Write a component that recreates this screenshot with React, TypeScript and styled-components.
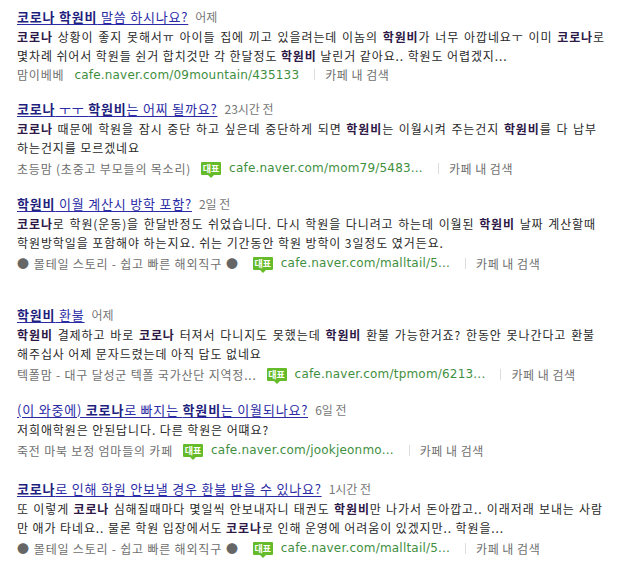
import React, { FC } from "react";
import styled, { createGlobalStyle } from "styled-components";

type Seg = { t: string; b?: boolean };
type Line = { segs: Seg[]; fill?: number };

type Item = {
  title: Seg[];
  date: string;
  body: Line[];
  source: string;
  dots?: boolean;
  badge?: boolean;
  url: string;
  above?: number;
};

const items: Item[] = [
  {
    title: [{ t: "코로나 학원비", b: true }, { t: " 말씀 하시나요?" }],
    date: "어제",
    body: [
      {
        fill: 588,
        segs: [
          { t: "코로나", b: true },
          { t: " 상황이 좋지 못해서ㅠ 아이들 집에 끼고 있을려는데 이놈의 " },
          { t: "학원비", b: true },
          { t: "가 너무 아깝네요ㅜ 이미 " },
          { t: "코로나", b: true },
          { t: "로" },
        ],
      },
      {
        segs: [
          { t: "몇차례 쉬어서 학원들 쉰거 합치것만 각 한달정도 " },
          { t: "학원비", b: true },
          { t: " 날린거 같아요.. 학원도 어렵겠지..." },
        ],
      },
    ],
    source: "맘이베베",
    url: "cafe.naver.com/09mountain/435133",
  },
  {
    title: [{ t: "코로나", b: true }, { t: " ㅜㅜ " }, { t: "학원비", b: true }, { t: "는 어찌 될까요?" }],
    date: "23시간 전",
    body: [
      {
        fill: 580,
        segs: [
          { t: "코로나", b: true },
          { t: " 때문에 학원을 잠시 중단 하고 싶은데 중단하게 되면 " },
          { t: "학원비", b: true },
          { t: "는 이월시켜 주는건지 " },
          { t: "학원비", b: true },
          { t: "를 다 납부" },
        ],
      },
      { segs: [{ t: "하는건지를 모르겠네요" }] },
    ],
    source: "초등맘 (초중고 부모들의 목소리)",
    badge: true,
    url: "cafe.naver.com/mom79/5483...",
  },
  {
    title: [{ t: "학원비", b: true }, { t: " 이월 계산시 방학 포함?" }],
    date: "2일 전",
    body: [
      {
        fill: 579,
        segs: [
          { t: "코로나", b: true },
          { t: "로 학원(운동)을 한달반정도 쉬었습니다. 다시 학원을 다니려고 하는데 이월된 " },
          { t: "학원비", b: true },
          { t: " 날짜 계산할때" },
        ],
      },
      { segs: [{ t: "학원방학일을 포함해야 하는지요. 쉬는 기간동안 학원 방학이 3일정도 였거든요." }] },
    ],
    source: "몰테일 스토리 - 쉽고 빠른 해외직구",
    dots: true,
    badge: true,
    url: "cafe.naver.com/malltail/5...",
  },
  {
    title: [{ t: "학원비", b: true }, { t: " 환불" }],
    date: "어제",
    body: [
      {
        fill: 578,
        segs: [
          { t: "학원비", b: true },
          { t: " 결제하고 바로 " },
          { t: "코로나", b: true },
          { t: " 터져서 다니지도 못했는데 " },
          { t: "학원비", b: true },
          { t: " 환불 가능한거죠? 한동안 못나간다고 환불" },
        ],
      },
      { segs: [{ t: "해주십사 어제 문자드렸는데 아직 답도 없네요" }] },
    ],
    source: "텍폴맘 - 대구 달성군 텍폴 국가산단 지역정...",
    badge: true,
    url: "cafe.naver.com/tpmom/6213...",
    above: 16,
  },
  {
    title: [
      { t: "(이 와중에) " },
      { t: "코로나", b: true },
      { t: "로 빠지는 " },
      { t: "학원비", b: true },
      { t: "는 이월되나요?" },
    ],
    date: "6일 전",
    body: [{ segs: [{ t: "저희애학원은 안된답니다. 다른 학원은 어떄요?" }] }],
    source: "죽전 마북 보정 엄마들의 카페",
    badge: true,
    url: "cafe.naver.com/jookjeonmo...",
  },
  {
    title: [{ t: "코로나", b: true }, { t: "로 인해 학원 안보낼 경우 환불 받을 수 있나요?" }],
    date: "1시간 전",
    body: [
      {
        fill: 586,
        segs: [
          { t: "또 이렇게 " },
          { t: "코로나", b: true },
          { t: " 심해질때마다 몇일씩 안보내자니 태권도 " },
          { t: "학원비", b: true },
          { t: "만 나가서 돈아깝고.. 이래저래 보내는 사람" },
        ],
      },
      {
        segs: [
          { t: "만 애가 타네요.. 물론 학원 입장에서도 " },
          { t: "코로나", b: true },
          { t: "로 인해 운영에 어려움이 있겠지만.. 학원을..." },
        ],
      },
    ],
    source: "몰테일 스토리 - 쉽고 빠른 해외직구",
    dots: true,
    badge: true,
    url: "cafe.naver.com/malltail/5...",
    above: 3,
  },
];

const App: FC = () => {
  return (
    <List>
      <GlobalStyle />
      {items.map((item, i) => (
        <Entry key={i} $above={item.above ?? 0}>
          <TitleRow>
            <TitleLink href="#">
              {item.title.map((s, j) =>
                s.b ? <TitleStrong key={j}>{s.t}</TitleStrong> : <span key={j}>{s.t}</span>
              )}
            </TitleLink>
            <DateText>{item.date}</DateText>
          </TitleRow>
          {item.body.map((line, j) => (
            <BodyLine key={j} $fill={line.fill}>
              {line.segs.map((s, k) => (s.b ? <Hit key={k}>{s.t}</Hit> : <span key={k}>{s.t}</span>))}
            </BodyLine>
          ))}
          <MetaRow $tall={item.badge}>
            <Source>
              {item.dots && <Dot>●</Dot>}
              {item.source}
              {item.dots && <Dot>●</Dot>}
            </Source>
            {item.badge && <Badge>대표</Badge>}
            <Url>{item.url}</Url>
            <Divider />
            <CafeSearch>카페 내 검색</CafeSearch>
          </MetaRow>
        </Entry>
      ))}
    </List>
  );
};

const GlobalStyle = createGlobalStyle`
  body {
    margin: 0;
    background: #fff;
    font-family: "Noto Sans CJK KR", "Noto Sans", sans-serif;
  }
`;

const List = styled.div`
  display: flex;
  flex-direction: column;
  gap: 15px;
  padding: 7px 0 0 17px;
  width: 632px;
  box-sizing: border-box;
`;

const Entry = styled.div<{ $above: number }>`
  display: flex;
  flex-direction: column;
  margin-top: ${(p) => p.$above}px;
`;

const TitleRow = styled.div`
  display: flex;
  align-items: baseline;
  gap: 7px;
  height: 20px;
  line-height: 20px;
  white-space: nowrap;
`;

const TitleLink = styled.a`
  font-size: 13px;
  letter-spacing: 0.8px;
  color: #2b2ba6;
  text-decoration: underline;
  text-underline-offset: 2px;
`;

const TitleStrong = styled.b`
  color: #1f1f7e;
  font-weight: 700;
`;

const DateText = styled.span`
  font-size: 12px;
  color: #777;
`;

const BodyLine = styled.div<{ $fill?: number }>`
  font-size: 12px;
  letter-spacing: 0.9px;
  line-height: 19px;
  color: #2a2a2a;
  white-space: nowrap;
  width: ${(p) => (p.$fill ? `${p.$fill}px` : "auto")};
  text-align-last: ${(p) => (p.$fill ? "justify" : "auto")};
`;

const Hit = styled.b`
  color: #2d1846;
  font-weight: 700;
`;

const MetaRow = styled.div<{ $tall?: boolean }>`
  display: flex;
  align-items: center;
  height: ${(p) => (p.$tall ? "22px" : "19px")};
  font-size: 12px;
  white-space: nowrap;
`;

const Source = styled.span`
  color: #6f6f6f;
  letter-spacing: 0.8px;
  margin-right: 10px;
`;

const Dot = styled.span`
  color: #666;
  margin: 0 4px;
  &:first-child {
    margin-left: 0;
  }
`;

const Badge = styled.span`
  position: relative;
  display: inline-flex;
  align-items: center;
  justify-content: center;
  width: 20px;
  height: 13px;
  margin-right: 8px;
  background: #66bb2a;
  color: #fff;
  font-size: 9px;
  font-weight: 700;
  line-height: 1;
  border-radius: 1px;

  &::after {
    content: "";
    position: absolute;
    left: 7px;
    bottom: -3px;
    border-left: 3px solid transparent;
    border-right: 3px solid transparent;
    border-top: 3px solid #66bb2a;
  }
`;

const Url = styled.span`
  color: #3f8f3f;
  font-family: "DejaVu Sans", "Noto Sans", sans-serif;
  font-size: 12px;
  letter-spacing: 0.2px;
`;

const Divider = styled.span`
  width: 1px;
  height: 11px;
  background: #ddd;
  margin: 0 10px 0 15px;
`;

const CafeSearch = styled.span`
  color: #6f6f6f;
  letter-spacing: 0.5px;
`;

export default App;
